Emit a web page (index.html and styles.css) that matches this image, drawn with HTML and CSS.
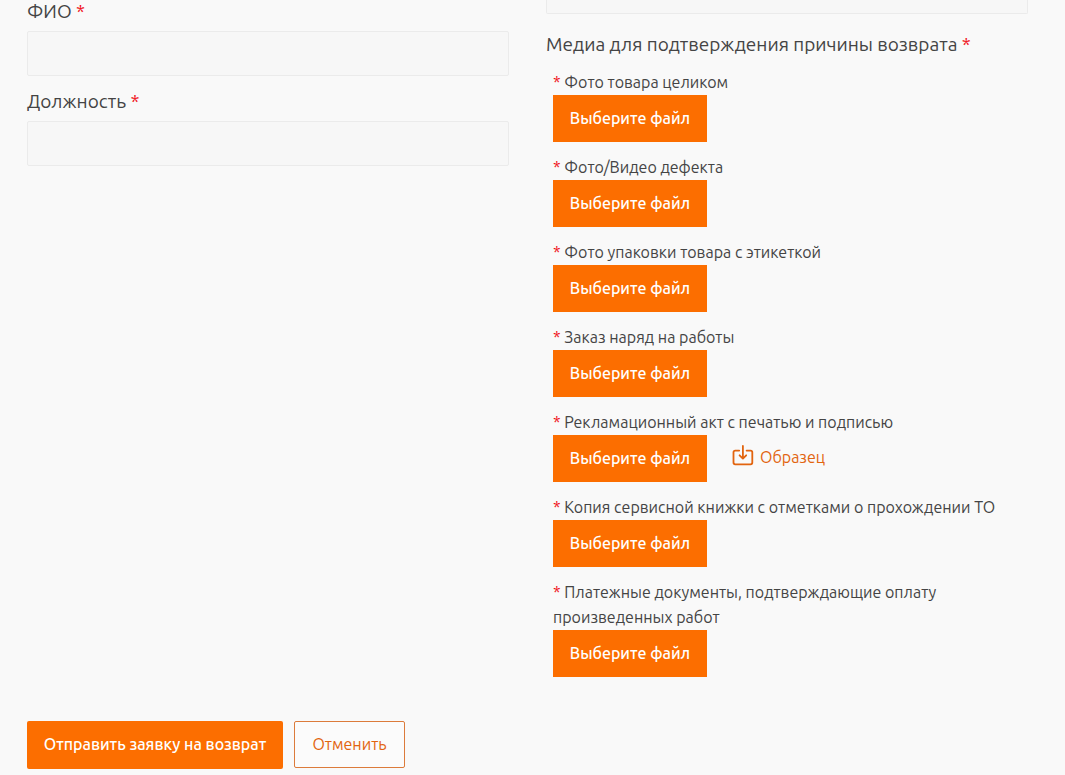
FILE: index.html
```html
<!DOCTYPE html>
<html lang="ru">
<head>
<meta charset="utf-8">
<meta name="viewport" content="width=device-width, initial-scale=1">
<title>Заявка на возврат</title>
<link rel="stylesheet" href="styles.css">
</head>
<body>
<form class="claim">
  <div class="columns">
    <div class="column">
      <div class="field">
        <label class="field-label" for="fio">ФИО <span class="req">*</span></label>
        <input class="text-input" id="fio" type="text">
      </div>
      <div class="field">
        <label class="field-label" for="post">Должность <span class="req">*</span></label>
        <input class="text-input" id="post" type="text">
      </div>
    </div>
    <div class="column">
      <input class="text-input text-input-cut" type="text" aria-label="Причина возврата">
      <h2 class="field-label media-title">Медиа для подтверждения причины возврата <span class="req">*</span></h2>
      <div class="uploads">
        <div class="upload">
          <div class="upload-label" id="u1"><span class="req">*</span> Фото товара целиком</div>
          <button class="btn btn-file" type="button" aria-describedby="u1">Выберите файл</button>
        </div>
        <div class="upload">
          <div class="upload-label" id="u2"><span class="req">*</span> Фото/Видео дефекта</div>
          <button class="btn btn-file" type="button" aria-describedby="u2">Выберите файл</button>
        </div>
        <div class="upload">
          <div class="upload-label" id="u3"><span class="req">*</span> Фото упаковки товара с этикеткой</div>
          <button class="btn btn-file" type="button" aria-describedby="u3">Выберите файл</button>
        </div>
        <div class="upload">
          <div class="upload-label" id="u4"><span class="req">*</span> Заказ наряд на работы</div>
          <button class="btn btn-file" type="button" aria-describedby="u4">Выберите файл</button>
        </div>
        <div class="upload">
          <div class="upload-label" id="u5"><span class="req">*</span> Рекламационный акт с печатью и подписью</div>
          <div class="upload-row">
            <button class="btn btn-file" type="button" aria-describedby="u5">Выберите файл</button>
            <a class="sample" href="#">
              <svg class="sample-icon" viewBox="0 0 22 22" width="22" height="22" fill="none" stroke="currentColor" stroke-width="1.8" stroke-linecap="round" stroke-linejoin="round" aria-hidden="true">
                <path d="M7.2 5.6H3.2Q1.5 5.6 1.5 7.3V17.6Q1.5 19.3 3.2 19.3H18.6Q20.3 19.3 20.3 17.6V7.3Q20.3 5.6 18.6 5.6H14.6"/>
                <path d="M10.9 1V13.4M7.6 10.3L10.9 13.6L14.2 10.3"/>
              </svg>
              <span>Образец</span>
            </a>
          </div>
        </div>
        <div class="upload">
          <div class="upload-label" id="u6"><span class="req">*</span> Копия сервисной книжки с отметками о прохождении ТО</div>
          <button class="btn btn-file" type="button" aria-describedby="u6">Выберите файл</button>
        </div>
        <div class="upload">
          <div class="upload-label" id="u7"><span class="req">*</span> Платежные документы, подтверждающие оплату произведенных работ</div>
          <button class="btn btn-file" type="button" aria-describedby="u7">Выберите файл</button>
        </div>
      </div>
    </div>
  </div>
  <div class="actions">
    <button class="btn btn-submit" type="submit">Отправить заявку на возврат</button>
    <button class="btn btn-cancel" type="button">Отменить</button>
  </div>
</form>
</body>
</html>
```
FILE: styles.css
```css
* {
  box-sizing: border-box;
}

body {
  margin: 0;
  background: #f9f9f9;
  color: #444;
  font-family: Ubuntu, "Noto Sans", "Open Sans", sans-serif;
  font-size: 16px;
  line-height: 25px;
}

.claim {
  padding: 0 37px 6px 27px;
}

.columns {
  display: grid;
  grid-template-columns: 1fr 1fr;
  gap: 37px;
}

.field {
  margin-bottom: 14px;
}

.field-label {
  display: block;
  margin: 0 0 9px;
  font-size: 19px;
  font-weight: 400;
  line-height: 22px;
}

.req {
  color: #f01020;
}

.text-input {
  display: block;
  width: 100%;
  height: 45px;
  padding: 0 12px;
  border: 1px solid #ebebeb;
  border-radius: 2px;
  background: #f7f7f7;
  color: inherit;
  font: inherit;
}

/* lower edge of the field above the fold */
.text-input-cut {
  height: 14px;
  border-top: 0;
  border-radius: 0 0 2px 2px;
}

.media-title {
  margin: 19px 0 15px;
}

.uploads {
  display: flex;
  flex-direction: column;
  gap: 13px;
  padding: 0 7px;
}

.upload-row {
  display: flex;
  align-items: center;
  gap: 25px;
}

.btn {
  display: block;
  height: 47px;
  padding: 0 16px;
  border: 0;
  background: #fc6e00;
  color: #fff;
  font: inherit;
  font-weight: 500;
  white-space: nowrap;
  cursor: pointer;
}

.btn-file {
  min-width: 154px;
}

.sample {
  display: flex;
  align-items: center;
  gap: 6px;
  padding-bottom: 2px;
  color: #e2640f;
  text-decoration: none;
}

.sample-icon {
  margin-bottom: 4px;
}

.actions {
  display: flex;
  align-items: flex-start;
  gap: 11px;
  margin-top: 44px;
}

.btn-submit {
  min-width: 256px;
  height: 48px;
  padding-bottom: 2px;
  border-radius: 2px;
}

.btn-cancel {
  min-width: 111px;
  border: 1px solid #dc7b3b;
  border-radius: 2px;
  background: #fbfbfb;
  color: #e2640f;
  font-weight: 400;
}
```
